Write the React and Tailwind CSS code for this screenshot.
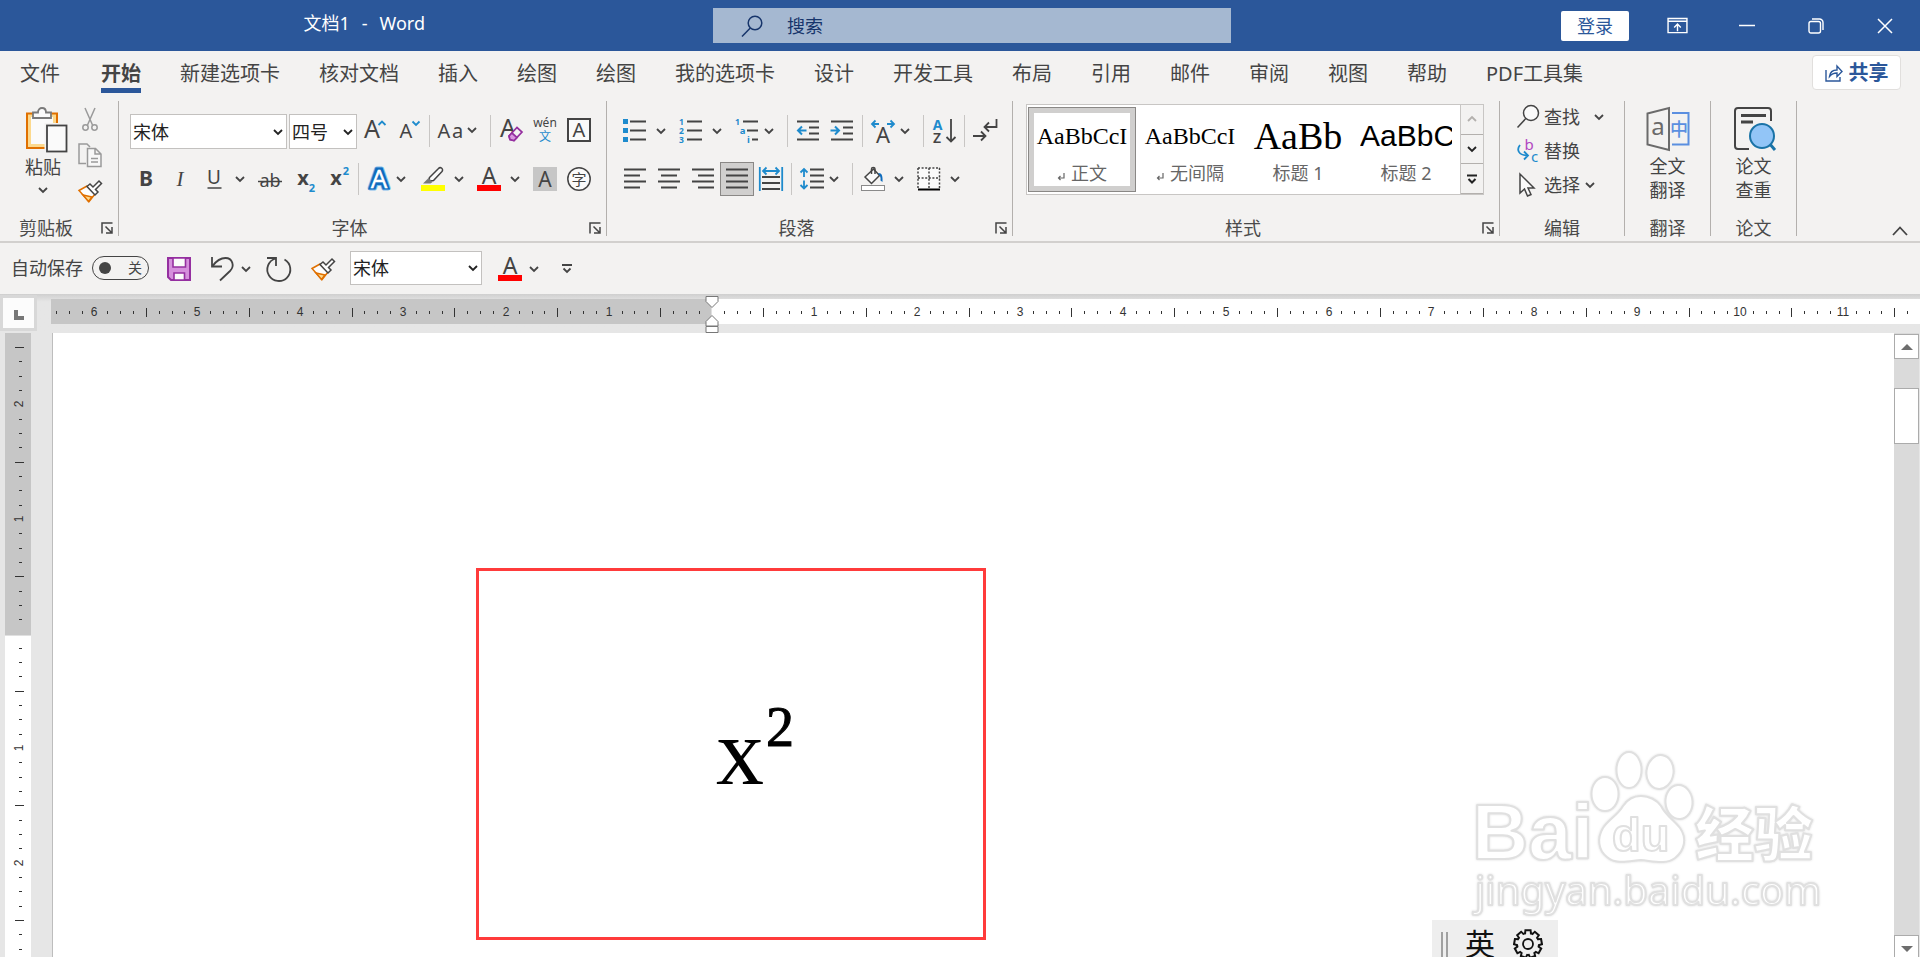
import React, { useState } from 'react';

const INK = '#444444';
const BLUE = '#1e8bcd';
const UI_FONT = "'Noto Sans','Noto Sans CJK SC',sans-serif";

const TABS = [
  '新建选项卡', '核对文档', '插入', '绘图', '绘图', '我的选项卡', '设计', '开发工具',
  '布局', '引用', '邮件', '审阅', '视图', '帮助', 'PDF工具集',
];

/* ---------- small shared pieces ---------- */

const Icon = ({ children, className = 'w-6 h-6', box = '0 0 24 24' }) => (
  <svg className={`shrink-0 overflow-visible ${className}`} viewBox={box} fill="none" stroke={INK} strokeWidth="1.5" aria-hidden="true">
    {children}
  </svg>
);

// Letter inside an icon
const T = ({ x, y, size, fill = INK, weight = 400, children, ...rest }) => (
  <text x={x} y={y} fontSize={size} fill={fill} fontWeight={weight} stroke="none" textAnchor="middle" fontFamily={UI_FONT} {...rest}>
    {children}
  </text>
);

const Chevron = ({ className = '', color = INK }) => (
  <svg className={`w-[10px] h-[10px] shrink-0 ${className}`} viewBox="0 0 10 10" fill="none" stroke={color} strokeWidth="1.8" aria-hidden="true">
    <path d="M1 3l4 4 4-4" />
  </svg>
);

const Tool = ({ label, children, active }) => (
  <button
    type="button"
    aria-label={label}
    className={`w-[34px] h-[34px] shrink-0 flex items-center justify-center ${active ? 'bg-[#d0cfce] border border-[#8a8886]' : ''}`}
  >
    {children}
  </button>
);

const SplitTool = ({ label, children, tight }) => (
  <div className="flex shrink-0">
    <Tool label={label}>{children}</Tool>
    <button type="button" aria-label={`${label}选项`} className={`flex items-center ${tight ? 'w-5' : 'w-[22px] pl-1'}`}>
      <Chevron />
    </button>
  </div>
);

const Sep = () => <div className="w-px h-8 mx-[3px] self-center bg-[#c8c6c4] shrink-0" />;

const Combo = ({ label, value, className }) => (
  <div className={`relative shrink-0 ${className}`}>
    <select
      aria-label={label}
      defaultValue={value}
      className="appearance-none w-full h-full bg-white border border-[#c3c1bf] pl-[2px] text-lg leading-6 text-[#222] outline-none"
    >
      <option>{value}</option>
    </select>
    <Chevron className="absolute right-1 top-1/2 -translate-y-1/2 pointer-events-none" color="#222" />
  </div>
);

const Group = ({ title, launcher, className = '', children }) => (
  <section className="flex flex-col border-r border-[#b3b0ad]">
    <div className={`h-[119px] ${className}`}>{children}</div>
    <div className="flex items-center">
      <h2 className="flex-1 text-center text-lg leading-4 text-[#4a4a4a]">{title}</h2>
      {launcher && (
        <button type="button" aria-label={`${title}设置`} className="w-[26px] pl-[9px]">
          <Icon className="w-3 h-3" box="0 0 12 12">
            <path d="M1 11.500V1h10.5M4.500 4.500l6 6M11 5v6H5" />
          </Icon>
        </button>
      )}
    </div>
  </section>
);

/* ---------- icons used more than once ---------- */

const PainterIcon = () => (
  <Icon>
    <path d="M1 11.500L9 7l8 8-6 7.500z" fill="#fdfdfd" stroke="#e07000" />
    <path d="M5 16l9 2-3.500 4.500z" fill="#fcd98d" stroke="#e07000" />
    <path d="M9 7.500l3-2.500 3 3 6-6 2.500 2.500-6 6 2.500 2.500-3 3z" fill="#fdfdfd" />
  </Icon>
);

const FontColorIcon = () => (
  <Icon>
    <T x="12" y="16.500" size="23">A</T>
    <rect x="0" y="18" width="24" height="6" fill="#ff0000" stroke="none" />
  </Icon>
);

const Lines = ({ rows }) => <path d={rows.map(([x1, x2, y]) => `M${x1} ${y}H${x2}`).join('')} strokeWidth="1.8" />;

const PasteIcon = () => (
  <Icon className="w-[42px] h-[46px]" box="0 0 42 46">
    <rect x="1" y="6.500" width="30" height="34.500" fill="#fcd98d" stroke="#e07000" strokeWidth="2" />
    <rect x="5" y="10" width="22" height="27" fill="#fafafa" stroke="none" />
    <path d="M7 11V5.500h5C12 -0.500 20 -0.500 20 5.500h5V11z" fill="#fafafa" stroke="#7a7a7a" strokeWidth="1.800" />
    <rect x="18.500" y="16" width="24" height="30" fill="#f3f2f1" stroke="none" />
    <rect x="21" y="18.500" width="19.500" height="26" fill="#fafafa" strokeWidth="1.800" />
  </Icon>
);

/* ---------- title bar ---------- */

const TitleBar = () => (
  <header className="grid grid-cols-[713fr_518fr_689fr] items-center h-[51px] bg-[#2b579a] text-white">
    <div className="flex justify-end gap-3 pr-[288px] pb-[6px] text-lg leading-6">
      <span>文档1</span>
      <span>-</span>
      <span>Word</span>
    </div>
    <label className="flex items-center h-[35px] bg-[#a5b8d1] pl-7 gap-6">
      <svg className="w-[22px] h-[22px] shrink-0" viewBox="0 0 22 22" fill="none" stroke="#17356b" strokeWidth="1.500" aria-hidden="true">
        <circle cx="14" cy="8" r="6.800" />
        <path d="M9.300 13L1 21.500" />
      </svg>
      <input type="text" aria-label="搜索" placeholder="搜索" className="flex-1 min-w-0 bg-transparent text-lg outline-none placeholder:text-[#17356b]" />
    </label>
    <div className="flex items-center justify-end pr-[27px]">
      <button type="button" className="w-[68px] h-[30px] rounded-xs bg-white text-[#2b579a] text-lg leading-6 mr-[38px]">登录</button>
      <button type="button" aria-label="功能区显示选项" className="mr-[51px]">
        <svg className="w-[21px] h-[17px]" viewBox="0 0 22 18" fill="none" stroke="#fff" strokeWidth="1.500">
          <path d="M1 1.500h20v15H1zM1 4.500h20M11 15V7.500M7.500 11L11 7.500l3.500 3.500" />
        </svg>
      </button>
      <button type="button" aria-label="最小化" className="mr-[53px]">
        <svg className="w-4 h-4" viewBox="0 0 16 16" stroke="#fff" strokeWidth="1.500"><path d="M0 7.500h16" /></svg>
      </button>
      <button type="button" aria-label="还原" className="mr-[53px]">
        <svg className="w-4 h-4" viewBox="0 0 16 16" fill="none" stroke="#fff" strokeWidth="1.400">
          <rect x="1" y="3.500" width="11.500" height="11.500" rx="2" />
          <path d="M4 1h7.500a3.500 3.500 0 013.500 3.500V12" />
        </svg>
      </button>
      <button type="button" aria-label="关闭">
        <svg className="w-4 h-4" viewBox="0 0 16 16" stroke="#fff" strokeWidth="1.500"><path d="M1 1l14 14M15 1L1 15" /></svg>
      </button>
    </div>
  </header>
);

const TabBar = () => (
  <nav className="flex items-start h-[49px] pl-5 pr-[19px] text-xl leading-7 text-[#444] whitespace-nowrap">
    <a href="#file" className="mr-[41px] mt-[9px]">文件</a>
    <a href="#home" className="mr-[39px] mt-[9px] h-[33px] border-b-5 border-[#2b579a] font-bold">开始</a>
    {TABS.map((name, i) => (
      <a key={i} href={`#tab-${i}`} className="mr-[39px] mt-[9px]">{name}</a>
    ))}
    <button type="button" className="ml-auto mt-1 flex items-center justify-center gap-[6px] w-[89px] h-[35px] shrink-0 rounded-sm border border-[#e1dfdd] bg-white text-[#2b579a] font-bold">
      <svg className="w-[18px] h-[18px]" viewBox="0 0 18 18" fill="none" stroke="#2b579a" strokeWidth="1.400" aria-hidden="true">
        <path d="M1 6v11h14v-4M4.500 12.500C5 8 8 6 12 6V2l5 5.500-5 5V9C8.500 9 6.500 10 4.500 12.500z" />
      </svg>
      共享
    </button>
  </nav>
);

/* ---------- ribbon groups ---------- */

const ClipboardGroup = () => (
  <Group title="剪贴板" launcher className="w-[118px] pt-[6px] flex">
    <button type="button" className="flex flex-col items-center w-[62px] ml-3 text-lg leading-6 text-[#444]">
      <span className="pl-2"><PasteIcon /></span>
      <span className="mt-[2px]">粘贴</span>
      <Chevron className="mt-[6px]" />
    </button>
    <div className="flex flex-col gap-3 ml-1">
      <button type="button" aria-label="剪切">
        <Icon>
          <g stroke="#9a9a9a">
            <path d="M7 1l7.500 17M17 1L9.500 18" />
            <circle cx="7.500" cy="20.500" r="2.700" />
            <circle cx="16.500" cy="20.500" r="2.700" />
          </g>
        </Icon>
      </button>
      <button type="button" aria-label="复制">
        <Icon>
          <path d="M8 20.500H1V1h8l3 3" stroke="#9a9a9a" />
          <path d="M9.500 5.500h8L23 11v12.500H9.500zM17 5.500V11h6M13 15.500h7M13 19h7" fill="#f7f7f7" stroke="#9a9a9a" />
        </Icon>
      </button>
      <button type="button" aria-label="格式刷"><PainterIcon /></button>
    </div>
  </Group>
);

const FontGroup = () => (
  <Group title="字体" launcher className="pl-[10px] pr-[10px] pt-3">
    <div className="flex items-start h-9">
      <Combo label="字体" value="宋体" className="w-[157px] h-[35px] self-end ml-px mr-[2px]" />
      <Combo label="字号" value="四号" className="w-[68px] h-[35px] self-end mr-px" />
      <Tool label="增大字号">
        <Icon><T x="9" y="20" size="25">A</T><path d="M15.500 7L19 3.500 22.500 7" stroke={BLUE} strokeWidth="1.800" /></Icon>
      </Tool>
      <Tool label="减小字号">
        <Icon><T x="9" y="20" size="20">A</T><path d="M15.500 3.500L19 7l3.500-3.500" stroke={BLUE} strokeWidth="1.800" /></Icon>
      </Tool>
      <Sep />
      <SplitTool label="更改大小写" tight>
        <Icon><T x="6" y="20" size="20">A</T><T x="19.500" y="20" size="20">a</T></Icon>
      </SplitTool>
      <Sep />
      <Tool label="清除格式">
        <Icon>
          <T x="9" y="19" size="25">A</T>
          <path d="M10 18l8-8.500 5 4.500-8 8.500-4-1z" fill="#f3f2f1" stroke="#952fa0" strokeWidth="1.700" />
          <path d="M10 18l3-3 5 4.500-3 3-4-1z" fill="#d795de" stroke="#952fa0" strokeWidth="1.700" />
        </Icon>
      </Tool>
      <Tool label="拼音指南">
        <Icon><T x="12" y="9" size="12">wén</T><T x="12" y="23" size="12" fill={BLUE}>文</T></Icon>
      </Tool>
      <Tool label="字符边框">
        <Icon><rect x="1" y="1" width="22" height="22" strokeWidth="2" fill="#fafafa" /><T x="12" y="19" size="20">A</T></Icon>
      </Tool>
    </div>
    <div className="flex items-center h-[34px] mt-[13px]">
      <Tool label="加粗"><Icon><T x="12" y="19" size="21" weight="700">B</T></Icon></Tool>
      <Tool label="倾斜"><Icon><T x="12" y="19" size="21" fontStyle="italic" fontFamily="'Liberation Serif',serif">I</T></Icon></Tool>
      <SplitTool label="下划线"><Icon><T x="12" y="17" size="19">U</T><path d="M5.500 21h14" /></Icon></SplitTool>
      <Tool label="删除线"><Icon><T x="12" y="20" size="18">ab</T><path d="M0 14.500h24" /></Icon></Tool>
      <Tool label="下标"><Icon><T x="11" y="18" size="20" weight="700">x</T><T x="20" y="25" size="11" weight="700" fill={BLUE}>2</T></Icon></Tool>
      <Tool label="上标"><Icon><T x="10" y="18" size="20" weight="700">x</T><T x="20" y="8" size="11" weight="700" fill={BLUE}>2</T></Icon></Tool>
      <Sep />
      <SplitTool label="文本效果" tight>
        <Icon>
          <T x="12" y="21" size="26" weight="700" fill="#fff" style={{ stroke: '#83beec', strokeWidth: 5, strokeLinejoin: 'round' }}>A</T>
          <T x="12" y="21" size="26" weight="700" fill="#fff" style={{ stroke: '#0f6cbd', strokeWidth: 3 }}>A</T>
          <T x="12" y="21" size="26" fill="#fff" style={{ stroke: '#fff', strokeWidth: 0.3 }}>A</T>
        </Icon>
      </SplitTool>
      <SplitTool label="突出显示">
        <Icon>
          <path d="M8.500 10.500L17.500 1.500a2.300 2.300 0 013.500 3L12.500 13.500l-3 .5-1.500-1.500z" fill="#fafafa" />
          <path d="M7.500 11l4 4-2 1.500H2z" fill="#7a7a7a" stroke="none" />
          <rect x="0" y="18" width="24" height="6" fill="#ffff00" stroke="none" />
        </Icon>
      </SplitTool>
      <SplitTool label="字体颜色"><FontColorIcon /></SplitTool>
      <Tool label="字符底纹">
        <Icon><rect width="24" height="24" fill="#c6c6c6" stroke="none" /><T x="12" y="20" size="21">A</T></Icon>
      </Tool>
      <Tool label="带圈字符">
        <Icon><circle cx="12" cy="12" r="11.200" fill="#fafafa" /><T x="12" y="17.500" size="15">字</T></Icon>
      </Tool>
    </div>
  </Group>
);

const ParagraphGroup = () => (
  <Group title="段落" launcher className="pl-[11px] pr-[10px] pt-3">
    <div className="flex items-center h-9">
      <SplitTool label="项目符号">
        <Icon>
          <path d="M0 0h5v5H0zM0 9h5v5H0zM0 18h5v5H0z" fill={BLUE} stroke="none" />
          <Lines rows={[[7, 23, 2.5], [7, 23, 11.5], [7, 23, 20.5]]} />
        </Icon>
      </SplitTool>
      <SplitTool label="编号">
        <Icon>
          <T x="2.500" y="6" size="8.500" weight="700" fill={BLUE}>1</T>
          <T x="2.500" y="15" size="8.500" weight="700" fill={BLUE}>2</T>
          <T x="2.500" y="24" size="8.500" weight="700" fill={BLUE}>3</T>
          <Lines rows={[[8, 23, 2.5], [8, 23, 11.5], [8, 23, 20.5]]} />
        </Icon>
      </SplitTool>
      <SplitTool label="多级列表" tight>
        <Icon>
          <T x="2.500" y="6" size="8.500" weight="700" fill={BLUE}>1</T>
          <T x="7.500" y="15" size="9.500" weight="700" fill={BLUE}>a</T>
          <T x="13.500" y="24" size="9.500" weight="700" fill={BLUE}>i</T>
          <Lines rows={[[8, 23, 2.5], [12, 23, 11.5], [17, 23, 20.5]]} />
        </Icon>
      </SplitTool>
      <Sep />
      <Tool label="减少缩进量">
        <Icon>
          <Lines rows={[[1, 23, 2.5], [13, 23, 8.5], [13, 23, 14.5], [1, 23, 20.5]]} />
          <path d="M10.500 11.500H2M6 7.500l-4 4 4 4" stroke={BLUE} strokeWidth="2" />
        </Icon>
      </Tool>
      <Tool label="增加缩进量">
        <Icon>
          <Lines rows={[[1, 23, 2.5], [13, 23, 8.5], [13, 23, 14.5], [1, 23, 20.5]]} />
          <path d="M.5 11.500H9M5 7.500l4 4-4 4" stroke={BLUE} strokeWidth="2" />
        </Icon>
      </Tool>
      <Sep />
      <SplitTool label="中文版式" tight>
        <Icon>
          <T x="12" y="24" size="22">A</T>
          <path d="M8 5H1.500M4.500 1.500L1 5l3.500 3.500M16 5h6.500M19.500 1.500L23 5l-3.500 3.500" stroke={BLUE} strokeWidth="1.800" />
        </Icon>
      </SplitTool>
      <Sep />
      <Tool label="排序">
        <Icon>
          <T x="5.500" y="10.500" size="14" weight="700" fill={BLUE}>A</T>
          <T x="5" y="24" size="14" weight="600">Z</T>
          <path d="M19 0v22.500M14.500 18l4.500 4.500 4.500-4.500" strokeWidth="1.800" />
        </Icon>
      </Tool>
      <Sep />
      <Tool label="显示编辑标记">
        <Icon>
          <path d="M23.500 0v8H12M16 3.500L11.500 8l4.500 4.500M0 17h12.500M8 12.500l4.500 4.500L8 21.500" strokeWidth="1.800" />
        </Icon>
      </Tool>
    </div>
    <div className="flex items-center h-[34px] mt-[13px]">
      <Tool label="左对齐"><Icon><Lines rows={[[1, 23, 2.5], [1, 17, 8.5], [1, 23, 14.5], [1, 17, 20.5]]} /></Icon></Tool>
      <Tool label="居中"><Icon><Lines rows={[[1, 23, 2.5], [4, 20, 8.5], [1, 23, 14.5], [4, 20, 20.5]]} /></Icon></Tool>
      <Tool label="右对齐"><Icon><Lines rows={[[1, 23, 2.5], [7, 23, 8.5], [1, 23, 14.5], [7, 23, 20.5]]} /></Icon></Tool>
      <Tool label="两端对齐" active><Icon><Lines rows={[[1, 23, 2.5], [1, 23, 8.5], [1, 23, 14.5], [1, 23, 20.5]]} /></Icon></Tool>
      <Tool label="分散对齐">
        <Icon>
          <Lines rows={[[3, 21, 10], [3, 21, 16], [3, 21, 22]]} />
          <path d="M.8 0v24M23.200 0v24M4 4h16M7.500.5L4 4l3.500 3.500M16.500.5L20 4l-3.500 3.500" stroke={BLUE} strokeWidth="1.800" />
        </Icon>
      </Tool>
      <Sep />
      <SplitTool label="行距" tight>
        <Icon>
          <Lines rows={[[10, 24, 2.5], [10, 24, 8.5], [10, 24, 14.5], [10, 24, 20.5]]} />
          <path d="M4 10V2M.5 5.500L4 2l3.500 3.500M4 13.500v8M.5 18L4 21.500 7.500 18" stroke={BLUE} strokeWidth="1.800" />
        </Icon>
      </SplitTool>
      <Sep />
      <SplitTool label="底纹">
        <Icon>
          <path d="M4 10l8.500-8 6 6.500-8 8z" fill="#fafafa" />
          <path d="M10.500 7V2c0-2 3.500-2 3.500 0v5" />
          <path d="M17 6.500c3-1 5 1 4.500 8.500l-2-1.500c.5-3.500-.5-5-2.500-7z" fill="#0f6cbd" stroke="none" />
          <rect x=".5" y="18.500" width="23" height="5" fill="#fff" stroke="#8a8a8a" strokeWidth="1" />
        </Icon>
      </SplitTool>
      <SplitTool label="边框">
        <Icon>
          <rect x="1" y="1" width="22" height="21" fill="#fafafa" stroke="none" />
          <path d="M1 1h22M1 1v20M22.500 1v20M12 1v20M1 11h22" strokeDasharray="2 1.600" />
          <path d="M1 22.500h22" stroke="#000" strokeWidth="2" />
        </Icon>
      </SplitTool>
    </div>
  </Group>
);

const ReturnMark = () => (
  <svg className="w-2 h-2 mt-2" viewBox="0 0 8 8" fill="none" stroke="#666" strokeWidth="1.200" aria-hidden="true">
    <path d="M7 0v5H1.500M3.500 3L1.500 5l2 2" />
  </svg>
);

const STYLES = [
  { name: '正文', sample: 'AaBbCcI', mark: true, active: true, font: 'text-2xl leading-14 font-[Liberation_Serif]' },
  { name: '无间隔', sample: 'AaBbCcI', mark: true, font: 'text-2xl leading-14 font-[Liberation_Serif]' },
  { name: '标题 1', sample: 'AaBb', font: 'text-[38px] leading-14 font-[Liberation_Serif]' },
  { name: '标题 2', sample: 'AaBbC', font: 'text-[30px] leading-14 font-[Liberation_Sans]' },
];

const StylesGroup = () => (
  <Group title="样式" launcher className="pl-[13px] pr-[15px] pt-[3px]">
    <div className="flex h-[91px] border border-[#c8c6c4] bg-white">
      <div className="flex py-[2px] pl-px">
        {STYLES.map((s) => (
          <button
            key={s.name}
            type="button"
            className={`w-[108px] h-[85px] flex flex-col items-center ${s.active ? 'border border-[#8a8886] ring-5 ring-inset ring-[#d0cfce]' : 'border border-transparent'}`}
          >
            <span className={`block w-[92px] h-14 overflow-hidden whitespace-nowrap text-black ${s.font}`}>{s.sample}</span>
            <span className="flex items-center gap-[6px] text-lg leading-[18px] text-[#666]">
              {s.mark && <ReturnMark />}
              {s.name}
            </span>
          </button>
        ))}
      </div>
      <div className="flex flex-col w-[23px] bg-[#f3f2f1] border-l border-[#c8c6c4]">
        <button type="button" aria-label="上一行" className="flex-1 flex items-center justify-center"><Chevron className="rotate-180" color="#b3b0ad" /></button>
        <button type="button" aria-label="下一行" className="flex-1 flex items-center justify-center border-y border-[#b3b0ad]"><Chevron color="#222" /></button>
        <button type="button" aria-label="其他" className="flex-1 flex items-center justify-center border-b border-[#b3b0ad]">
          <Icon className="w-3 h-3" box="0 0 12 12"><path d="M1 2.500h10M2.500 6L6 9.500 9.500 6" stroke="#222" strokeWidth="2" /></Icon>
        </button>
      </div>
    </div>
  </Group>
);

const EditingGroup = () => (
  <Group title="编辑" className="flex flex-col items-start gap-[2px] w-[124px] pl-[17px] text-lg leading-8 text-[#444] whitespace-nowrap">
    <button type="button" className="flex items-center h-8">
      <Icon className="w-[22px] h-6" box="0 0 22 24"><circle cx="14" cy="8" r="7.500" fill="#fafafa" /><path d="M8.800 13.500L.5 22.500" /></Icon>
      <span className="ml-[5px]">查找</span>
      <Chevron className="ml-[14px]" />
    </button>
    <button type="button" className="flex items-center h-8">
      <Icon className="w-[22px] h-6" box="0 0 22 24">
        <T x="12" y="11" size="15" fill="#b146c2">b</T>
        <T x="17.500" y="23" size="15" fill={BLUE}>c</T>
        <path d="M3 6c-4 5-1 10.500 7.500 10.500M7 12.500l4 4-4 4" stroke={BLUE} strokeWidth="1.800" />
      </Icon>
      <span className="ml-[5px]">替换</span>
    </button>
    <button type="button" className="flex items-center h-8">
      <Icon className="w-[22px] h-6" box="0 0 22 24"><path d="M3 1v19l4.500-4 3 7 3.500-1.500-3-6.500h6z" fill="#fafafa" /></Icon>
      <span className="ml-[5px]">选择</span>
      <Chevron className="ml-[5px]" />
    </button>
  </Group>
);

const TranslateGroup = () => (
  <Group title="翻译" className="w-[85px] pt-[6px]">
    <button type="button" className="flex flex-col items-center w-full text-lg leading-6 text-[#444]">
      <Icon className="w-11 h-[44px]" box="0 0 44 44">
        <path d="M1.500 6.500L23 1v42L1.500 37.500z" stroke="#6b6b6b" strokeWidth="2" />
        <T x="12" y="28" size="24" fill="#6b6b6b">a</T>
        <path d="M26 6h16.500v31.500H26" stroke="#5b8fe0" strokeWidth="2" />
        <T x="33" y="29" size="18" weight="500" fill="#5b8fe0">中</T>
      </Icon>
      <span className="mt-[3px]">全文</span>
      <span>翻译</span>
    </button>
  </Group>
);

const PaperGroup = () => (
  <Group title="论文" className="w-[85px] pt-[6px]">
    <button type="button" className="flex flex-col items-center w-full text-lg leading-6 text-[#444]">
      <Icon className="w-11 h-[44px]" box="0 0 44 44">
        <path d="M39 14V4a3 3 0 00-3-3H6a3 3 0 00-3 3v35a3 3 0 003 3h11" strokeWidth="2" />
        <path d="M9 8.500h25M9 15h12" strokeWidth="2.800" />
        <path d="M37 36l6 7" stroke="#1a73a7" strokeWidth="3" />
        <circle cx="30" cy="29" r="12" fill="#92c5f7" stroke="#1a73a7" strokeWidth="2" />
      </Icon>
      <span className="mt-[3px]">论文</span>
      <span>查重</span>
    </button>
  </Group>
);

const Ribbon = () => (
  <div className="flex items-start pt-px pb-[5px] border-b-2 border-[#d2d0ce]">
    <ClipboardGroup />
    <FontGroup />
    <ParagraphGroup />
    <StylesGroup />
    <EditingGroup />
    <TranslateGroup />
    <PaperGroup />
    <button type="button" aria-label="折叠功能区" className="ml-auto mr-3 self-end">
      <Icon className="w-4 h-3" box="0 0 16 12"><path d="M1 11L8 3.500l7 7.500" strokeWidth="1.800" /></Icon>
    </button>
  </div>
);

const QuickAccess = () => {
  const [autoSave, setAutoSave] = useState(false);
  return (
    <div className="flex items-center h-[51px] pl-[11px] pb-[2px] text-lg text-[#444]">
      <label className="flex items-center gap-[9px]">
        自动保存
        <input type="checkbox" checked={autoSave} onChange={(e) => setAutoSave(e.target.checked)} className="sr-only" />
        <span className="flex items-center justify-between w-[57px] h-6 px-[6px] rounded-full border border-[#444] text-sm leading-5">
          <span className="w-3 h-3 rounded-full bg-[#444]" />
          <span>关</span>
        </span>
      </label>
      {/* the drawings sit slightly below the centre line of the text */}
      <div className="flex items-center pt-[3px]">
        <button type="button" aria-label="保存" className="ml-[18px]">
          <Icon>
            <path d="M1 1h22v22H4l-3-3z" fill="#d58fdc" stroke="#952fa0" strokeWidth="2" />
            <path d="M6 1h12.500v9H6zM7 23v-7h10.500v7z" fill="#fafafa" stroke="#952fa0" strokeWidth="1.600" />
          </Icon>
        </button>
        <button type="button" aria-label="撤消" className="ml-5">
          <Icon><path d="M1 0v9.500h10M1.500 9C6 3 10 1 14.500 1c7 0 9.500 8 4.500 13L9 23.500" strokeWidth="1.800" /></Icon>
        </button>
        <button type="button" aria-label="撤消选项" className="ml-[6px]"><Chevron /></button>
        <button type="button" aria-label="重复" className="ml-4">
          <Icon><path d="M0 1h9v8M8.500 1.500A11.500 11.500 0 1017.500 2.500" strokeWidth="1.800" /></Icon>
        </button>
        <button type="button" aria-label="格式刷" className="ml-5"><PainterIcon /></button>
      </div>
      <Combo label="快速字体" value="宋体" className="w-[132px] h-[34px] ml-[15px]" />
      <div className="flex items-center pt-[3px]">
        <button type="button" aria-label="字体颜色" className="ml-4"><FontColorIcon /></button>
        <button type="button" aria-label="颜色选项" className="ml-[7px]"><Chevron /></button>
        <button type="button" aria-label="自定义快速访问工具栏" className="ml-[22px]">
          <Icon className="w-3 h-3" box="0 0 12 12"><path d="M1 2h10M2.500 5.500L6 9l3.500-3.500" strokeWidth="1.800" /></Icon>
        </button>
      </div>
    </div>
  );
};

/* ---------- rulers ---------- */

// Marks at every eighth of a unit, long at the half, a number on the whole
const buildMarks = (from, to, origin, unit) => {
  const marks = [];
  for (let i = from; i <= to; i += 1) {
    if (i !== 0) marks.push({ i, pos: Math.floor(origin + (i * unit) / 8) });
  }
  return marks;
};

const HorizontalRuler = () => (
  <div className="relative flex-1 h-[25px] flex ml-[14px]">
    <div className="w-[660px] bg-[#c6c6c6]" />
    <div className="flex-1 bg-white border-l border-[#e0e0e0]" />
    <svg className="absolute inset-0 w-full h-full overflow-hidden" aria-hidden="true">
      {buildMarks(-51, 95, 661, 102.85).map(({ i, pos }) =>
        i % 8 === 0 ? (
          <text key={i} x={pos} y="17" fontSize="12" fill="#333" textAnchor="middle" fontFamily="'Liberation Sans',sans-serif">{Math.abs(i / 8)}</text>
        ) : (
          <rect key={i} x={pos} y={i % 4 === 0 ? 9 : 12} width="1" height={i % 4 === 0 ? 9 : 3} fill="#333" />
        ),
      )}
    </svg>
    <svg className="absolute left-[654px] -top-[3px] w-[14px] h-[38px]" viewBox="0 0 14 38" fill="#fff" stroke="#777" aria-hidden="true">
      <path d="M1 .5h12v5L7 11.500 1 5.500zM7 19.500l6 6V30H1v-4.500zM1 30.500h12v6H1z" />
    </svg>
  </div>
);

const VerticalRuler = () => (
  <div className="relative w-[26px] ml-[5px] flex flex-col shrink-0 overflow-hidden">
    <div className="h-[302px] bg-[#c6c6c6] shrink-0" />
    <div className="flex-1 bg-white border-t border-[#e0e0e0]" />
    <svg className="absolute inset-0 w-full h-full" aria-hidden="true">
      {buildMarks(-20, 22, 301, 114.6).map(({ i, pos }) =>
        i % 8 === 0 ? (
          <text key={i} transform={`translate(18 ${pos}) rotate(-90)`} fontSize="12" fill="#333" textAnchor="middle" fontFamily="'Liberation Sans',sans-serif">{Math.abs(i / 8)}</text>
        ) : (
          <rect key={i} x={i % 4 === 0 ? 10 : 14} y={pos} width={i % 4 === 0 ? 9 : 3} height="1" fill="#333" />
        ),
      )}
    </svg>
  </div>
);

/* ---------- document ---------- */

const Watermark = () => (
  <svg className="absolute right-[70px] bottom-[38px] w-[360px] h-[172px]" viewBox="0 0 360 172" aria-hidden="true">
    <g fill="#fff" stroke="#e0e0e0" strokeWidth="2" strokeLinejoin="round" filter="drop-shadow(0 0 1px #dcdcdc)">
      <text x="8" y="112" fontSize="78" fontWeight="700" fontFamily="'Liberation Sans',sans-serif">Bai</text>
      <ellipse cx="141" cy="47" rx="13.500" ry="17" />
      <ellipse cx="165" cy="23" rx="12.500" ry="18" />
      <ellipse cx="196" cy="25" rx="13.500" ry="17" transform="rotate(8 196 25)" />
      <ellipse cx="215" cy="55" rx="13.500" ry="17" transform="rotate(-4 215 55)" />
      <path d="M177 49c-8 0-14 4-18 10-5 9-14 13-20 22-6 10-5 22 4 29 9 8 22 4 34 3 12 1 25 5 34-2 10-8 12-20 5-30-6-8-14-12-19-22-4-6-12-10-20-10z" />
      <text x="148" y="104" fontSize="47" fontFamily="'Liberation Sans',sans-serif" fontWeight="700">du</text>
      <text x="231" y="109" fontSize="59" fontWeight="900" fontFamily="'Noto Sans CJK SC',sans-serif">经验</text>
      <text x="11" y="158" fontSize="40" fontWeight="400" fontFamily="'Noto Sans',sans-serif">jingyan.baidu.com</text>
    </g>
  </svg>
);

const GearIcon = () => {
  const teeth = Array.from({ length: 9 }, (_, n) => n * 40);
  return (
    <svg className="w-[30px] h-[30px]" viewBox="-15 -15 30 30" fill="none" aria-hidden="true">
      {teeth.map((a) => (
        <path key={a} d="M-3.200 -10L-2.800 -14H2.800L3.200 -10" fill="#111" stroke="#111" strokeWidth="1.500" transform={`rotate(${a})`} />
      ))}
      <circle r="11" fill="#eee" stroke="#111" strokeWidth="1.800" />
      {teeth.map((a) => (
        <path key={a} d="M-2 -9L-1.800 -12.700H1.800L2 -9z" fill="#eee" transform={`rotate(${a})`} />
      ))}
      <circle r="5" stroke="#111" strokeWidth="1.800" />
    </svg>
  );
};

const ImeBar = () => (
  <div className="absolute right-[336px] bottom-0 flex items-start w-[126px] h-[37px] bg-[#eee] pt-[9px] pl-[9px] overflow-hidden">
    <div className="w-[7px] h-7 mt-[3px] border-x-2 border-[#a0a0a0] shrink-0" />
    <button type="button" className="ml-[17px] text-3xl leading-[30px] text-[#111]">英</button>
    <button type="button" aria-label="输入法设置" className="ml-[18px]"><GearIcon /></button>
  </div>
);

const Scrollbar = () => (
  <div className="flex flex-col w-[25px] mr-px pt-px bg-[#dadada] shrink-0">
    <button type="button" aria-label="向上滚动" className="h-[25px] flex items-center justify-center border border-[#ababab] bg-white shrink-0">
      <svg className="w-3 h-[6px]" viewBox="0 0 12 6"><path d="M0 6l6-6 6 6z" fill="#6d6d6d" /></svg>
    </button>
    <div className="flex-1 pt-[29px]">
      <div className="h-14 border border-[#ababab] bg-white" />
    </div>
    <button type="button" aria-label="向下滚动" className="h-[22px] pt-1 flex items-center justify-center border border-b-0 border-[#ababab] bg-white shrink-0">
      <svg className="w-3 h-[6px]" viewBox="0 0 12 6"><path d="M0 0l6 6 6-6z" fill="#6d6d6d" /></svg>
    </button>
  </div>
);

const Workspace = () => (
  <main className="flex-1 min-h-0 flex flex-col bg-[#e6e6e6]">
    <div className="flex items-start h-[39px] shrink-0 pt-[5px] bg-linear-to-b from-[#cfcfcf] to-[#e6e6e6] to-20%">
      <button type="button" aria-label="制表符" className="w-[37px] h-9 -mt-1 pt-1 shrink-0 border-3 border-[#d8d8d8] bg-[#fcfcfc] flex items-center justify-center">
        <svg className="w-[10px] h-[10px]" viewBox="0 0 10 10"><path d="M0 0h4v6h6v4H0z" fill="#777" /></svg>
      </button>
      <HorizontalRuler />
    </div>
    <div className="flex flex-1 min-h-0">
      <VerticalRuler />
      <article className="relative flex-1 ml-[21px] border-l border-[#bdbdbd] bg-white overflow-hidden">
        <div className="absolute left-[423px] top-[235px] w-[510px] h-[372px] border-3 border-[#ff3b3b]" />
        <p className="absolute left-[663px] top-[359px] text-[96px] leading-[120px] text-black font-[Liberation_Serif]">
          x<sup className="ml-[2px] text-[56px] leading-none -top-[38px] align-baseline [-webkit-text-stroke:1px_black]">2</sup>
        </p>
        <Watermark />
        <ImeBar />
      </article>
      <Scrollbar />
    </div>
  </main>
);

const App = () => (
  <div className="h-screen flex flex-col overflow-hidden bg-[#f3f2f1] font-['Noto_Sans','Noto_Sans_CJK_SC',sans-serif]">
    <TitleBar />
    <TabBar />
    <Ribbon />
    <QuickAccess />
    <Workspace />
  </div>
);

export default App;
